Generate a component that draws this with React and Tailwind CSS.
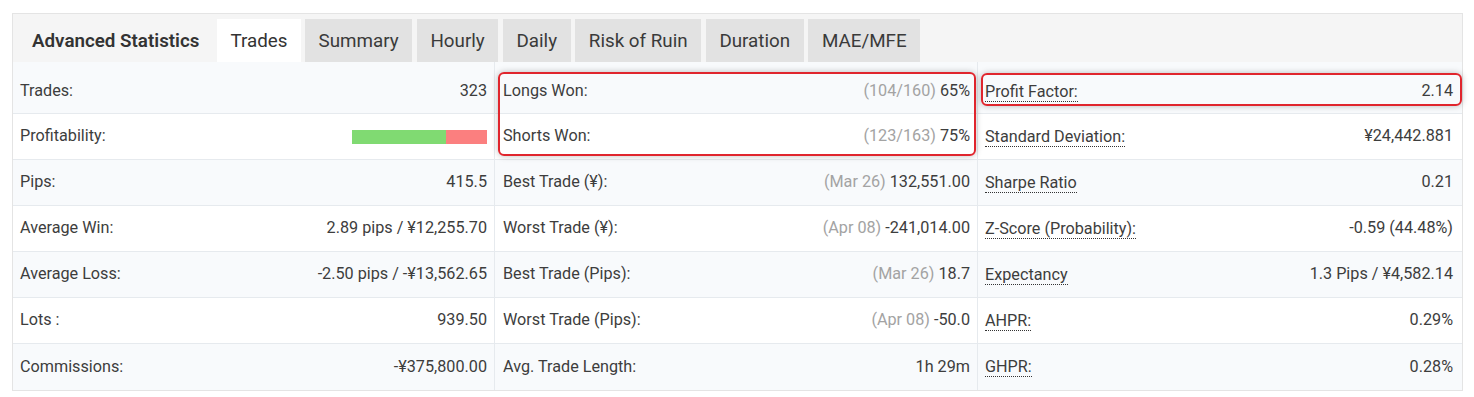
import React from "react";

const font = { fontFamily: "Roboto, 'Liberation Sans', sans-serif" };

const tabs = ["Summary", "Hourly", "Daily", "Risk of Ruin", "Duration", "MAE/MFE"];

function Row({ children, odd, first, last }) {
  return (
    <div
      className={
        "flex items-center justify-between px-[7px] " +
        (first ? "h-[52px] pt-[9px] pb-[1px] " : "h-[46px] ") +
        (odd ? "bg-[#f8fafc] " : "bg-white ") +
        (last ? "" : "border-b border-[#e6eaee]")
      }
    >
      {children}
    </div>
  );
}

const Gray = ({ children }) => <span className="text-[#a3a3a3]">{children}</span>;

const col1 = [
  ["Trades:", "323"],
  ["Profitability:", "BAR"],
  ["Pips:", "415.5"],
  ["Average Win:", "2.89 pips / ¥12,255.70"],
  ["Average Loss:", "-2.50 pips / -¥13,562.65"],
  ["Lots :", "939.50"],
  ["Commissions:", "-¥375,800.00"],
];

const col2 = [
  ["Longs Won:", "(104/160)", "65%"],
  ["Shorts Won:", "(123/163)", "75%"],
  ["Best Trade (¥):", "(Mar 26)", "132,551.00"],
  ["Worst Trade (¥):", "(Apr 08)", "-241,014.00"],
  ["Best Trade (Pips):", "(Mar 26)", "18.7"],
  ["Worst Trade (Pips):", "(Apr 08)", "-50.0"],
  ["Avg. Trade Length:", null, "1h 29m"],
];

const col3 = [
  ["Profit Factor:", "2.14"],
  ["Standard Deviation:", "¥24,442.881"],
  ["Sharpe Ratio", "0.21"],
  ["Z-Score (Probability):", "-0.59 (44.48%)"],
  ["Expectancy", "1.3 Pips / ¥4,582.14"],
  ["AHPR:", "0.29%"],
  ["GHPR:", "0.28%"],
];

export default function App() {
  return (
    <div className="bg-white w-[1474px] h-[397px] pt-[13px] pl-[12px]" style={font}>
      <div className="w-[1451px] border border-[#e4e4e4] text-[16.2px] text-[#3d3d3d]">
        <div className="h-[48px] bg-[#f5f5f5] flex items-end">
          <div className="w-[204px] h-[43px] flex items-center pt-[1px] pl-[19px] text-[18.8px] font-semibold text-[#333] whitespace-nowrap">
            Advanced Statistics
          </div>
          <div className="h-[43px] w-[84px] flex items-center justify-center pt-[1px] bg-white text-[18.8px] text-[#333]">
            Trades
          </div>
          <div className="flex items-end gap-[4.6px] ml-[4px]">
            {tabs.map((t) => (
              <div
                key={t}
                className="h-[43px] px-[13.6px] pt-[1px] flex items-center bg-[#e2e2e2] text-[18.8px] text-[#3a3a3a] whitespace-nowrap"
              >
                {t}
              </div>
            ))}
          </div>
        </div>
        <div className="relative grid grid-cols-[482px_483px_484px]">
          <div className="border-r border-[#e6eaee]">
            {col1.map(([l, v], i) => (
              <Row key={l} odd={i % 2 === 0} first={i === 0} last={i === 6}>
                <span>{l}</span>
                {v === "BAR" ? (
                  <span className="flex h-[14px] w-[135px]">
                    <span className="h-full w-[94px] bg-[#80da72]" />
                    <span className="h-full flex-1 bg-[#fb7f7f]" />
                  </span>
                ) : (
                  <span>{v}</span>
                )}
              </Row>
            ))}
          </div>
          <div className="border-r border-[#e6eaee]">
            {col2.map(([l, g, v], i) => (
              <Row key={l} odd={i % 2 === 0} first={i === 0} last={i === 6}>
                <span className="pl-[1px]">{l}</span>
                <span>
                  {g && <Gray>{g} </Gray>}
                  {v}
                </span>
              </Row>
            ))}
          </div>
          <div>
            {col3.map(([l, v], i) => (
              <Row key={l} odd={i % 2 === 0} first={i === 0} last={i === 6}>
                <span className="border-b border-dotted border-[#333] leading-[19px]">{l}</span>
                <span className="pr-[2px]">{v}</span>
              </Row>
            ))}
          </div>
          <div className="absolute left-[485px] top-[10px] w-[478px] h-[84px] rounded-[6px] border-2 border-[#e0252d] shadow-[0_0_6px_rgba(0,0,0,0.25)] pointer-events-none" />
          <div className="absolute left-[968px] top-[11px] w-[481px] h-[33px] rounded-[6px] border-2 border-[#e0252d] shadow-[0_0_6px_rgba(0,0,0,0.25)] pointer-events-none" />
        </div>
      </div>
    </div>
  );
}
